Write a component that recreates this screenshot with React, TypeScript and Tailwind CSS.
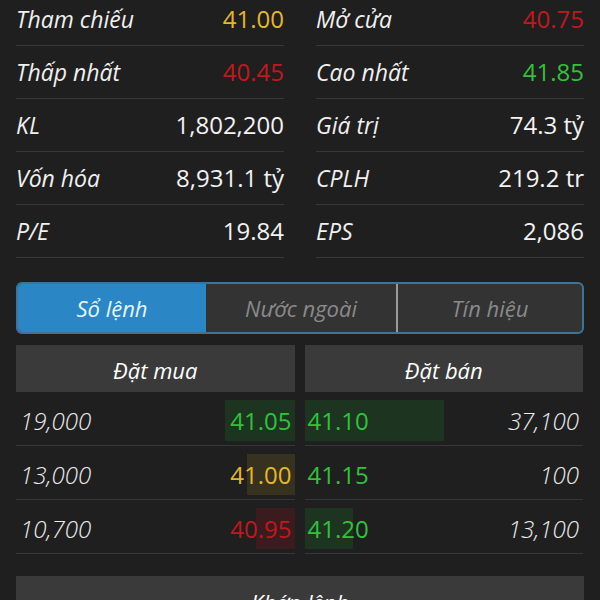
const font = { fontFamily: '"Open Sans", "Noto Sans", sans-serif' };

const stats = [
  [
    { label: "Tham chiếu", value: "41.00", color: "text-[#e6b729]" },
    { label: "Mở cửa", value: "40.75", color: "text-[#c3171d]" },
  ],
  [
    { label: "Thấp nhất", value: "40.45", color: "text-[#c3171d]" },
    { label: "Cao nhất", value: "41.85", color: "text-[#31c23c]" },
  ],
  [
    { label: "KL", value: "1,802,200", color: "text-[#f2f2f2]" },
    { label: "Giá trị", value: "74.3 tỷ", color: "text-[#f2f2f2]" },
  ],
  [
    { label: "Vốn hóa", value: "8,931.1 tỷ", color: "text-[#f2f2f2]" },
    { label: "CPLH", value: "219.2 tr", color: "text-[#f2f2f2]" },
  ],
  [
    { label: "P/E", value: "19.84", color: "text-[#f2f2f2]" },
    { label: "EPS", value: "2,086", color: "text-[#f2f2f2]" },
  ],
];

const bids = [
  { qty: "19,000", price: "41.05", color: "text-[#31c23c]", bg: "bg-[#1d3520]", w: 70 },
  { qty: "13,000", price: "41.00", color: "text-[#e6b729]", bg: "bg-[#373120]", w: 48 },
  { qty: "10,700", price: "40.95", color: "text-[#c3171d]", bg: "bg-[#3a1c1e]", w: 39 },
];

const asks = [
  { qty: "37,100", price: "41.10", w: 139 },
  { qty: "100", price: "41.15", w: 0 },
  { qty: "13,100", price: "41.20", w: 48 },
];

const StatCell = ({ label, value, color }: { label: string; value: string; color: string }) => (
  <div className="flex h-[53px] items-center justify-between border-b border-[#373737]">
    <span className="text-[23px] italic text-[#f0f0f0]">{label}</span>
    <span className={`text-[24px] ${color}`}>{value}</span>
  </div>
);

export default function App() {
  return (
    <div className="h-[600px] w-[600px] overflow-hidden bg-[#1f1f1f]" style={font}>
      <div className="-mt-[7px] grid grid-cols-2 gap-x-8 px-4">
        {stats.map((row) =>
          row.map((c) => <StatCell key={c.label} {...c} />)
        )}
      </div>

      <div className="mx-4 mt-6 flex h-[52px] overflow-hidden rounded-md border-2 border-[#3f7396] bg-[#333333] text-[22px] italic">
        <div className="flex w-[188px] items-center justify-center bg-[#2b86c6] text-[#e6f4ff]">Sổ lệnh</div>
        <div className="flex w-[190px] items-center justify-center text-[#8a8a8a]">Nước ngoài</div>
        <div className="flex flex-1 items-center justify-center border-l-2 border-[#9a9a9a] text-[#8a8a8a]">Tín hiệu</div>
      </div>

      <div className="mt-[11px] grid grid-cols-2 gap-[10px] pl-4 pr-[17px]">
        <div>
          <div className="flex h-[47px] items-center justify-center bg-[#3a3a3a] pt-1 text-[22px] italic text-white">Đặt mua</div>
          {bids.map((b) => (
            <div key={b.price} className="flex h-[54px] items-stretch justify-between border-b border-[#373737] pb-1 pt-2">
              <span className="flex items-center pl-1 text-[24px] font-light italic text-[#ececec]">{b.qty}</span>
              <span className={`relative flex items-center pr-[3px] text-[24px] ${b.color}`}>
                <span className={`absolute inset-y-0 right-0 ${b.bg}`} style={{ width: b.w }} />
                <span className="relative">{b.price}</span>
              </span>
            </div>
          ))}
        </div>
        <div>
          <div className="flex h-[47px] items-center justify-center bg-[#3a3a3a] pt-1 text-[22px] italic text-white">Đặt bán</div>
          {asks.map((a) => (
            <div key={a.price} className="flex h-[54px] items-stretch justify-between border-b border-[#373737] pb-1 pt-2">
              <span className="relative flex items-center pl-[3px] text-[24px] text-[#31c23c]">
                <span className="absolute inset-y-0 left-0 bg-[#1d3520]" style={{ width: a.w }} />
                <span className="relative">{a.price}</span>
              </span>
              <span className="flex items-center pr-1 text-[24px] font-light italic text-[#ececec]">{a.qty}</span>
            </div>
          ))}
        </div>
      </div>

      <div className="mx-4 mt-[22px] flex h-[48px] justify-center bg-[#3a3a3a] pt-[10px] text-[22px] italic text-white">Khớp lệnh</div>
    </div>
  );
}
